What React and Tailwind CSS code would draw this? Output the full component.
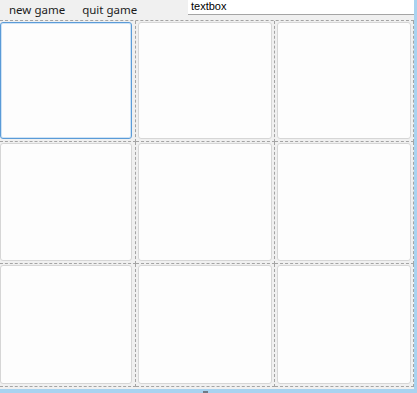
import React from 'react';

const rows = [0, 1, 2];
const cols = [0, 1, 2];

const Cell = ({ row, col }) => {
  const focused = row === 0 && col === 0;
  const widths = ['w-[136px]', 'w-[139px]', 'w-[139px]'];
  const heights = ['h-[121px]', 'h-[122px]', 'h-[123px]'];
  return (
    <div
      className={`${widths[col]} ${heights[row]} border-r border-b border-dashed border-[#a4a4a4] ${
        col === 0 ? 'pl-0 pr-[3px]' : 'px-[2px]'
      } py-[1px] pb-[2px] flex`}
    >
      <button
        className={`flex-1 rounded-[3px] bg-[#fdfdfd] border ${
          focused ? 'border-[#5a9bd8] shadow-[inset_0_0_0_1px_#cfe3f5]' : 'border-[#d6d6d6]'
        }`}
      />
    </div>
  );
};

const App = () => {
  return (
    <div className="w-[417px] h-[393px] bg-[#f0f0f0] flex flex-col overflow-hidden font-['Noto_Sans',sans-serif]">
      <div className="flex flex-1">
        <div className="w-[414px] flex flex-col">
          {/* menu + textbox */}
          <div className="h-[20px] flex items-start">
            <div className="flex items-center h-[19px] text-[11.5px] text-[#1b1b1b]">
              <span className="ml-[9px]">new game</span>
              <span className="ml-[17px]">quit game</span>
            </div>
            <div className="ml-auto w-[226px] h-[15px] bg-white border-b border-[#a5a5a5] pl-[3px] text-[11px] leading-[12px] text-black font-['Liberation_Sans',sans-serif]">
              textbox
            </div>
          </div>
          {/* board */}
          <div className="border-t border-dashed border-[#a4a4a4] flex flex-col">
            {rows.map((r) => (
              <div key={r} className="flex">
                {cols.map((c) => (
                  <Cell key={c} row={r} col={c} />
                ))}
              </div>
            ))}
          </div>
        </div>
        <div className="w-[3px] bg-[#a9d3f0]" />
      </div>
      <div className="h-[4px] bg-[#a9d3f0] relative">
        <div className="absolute left-[203px] top-[2px] w-[5px] h-[2px] bg-[#6f7a86]" />
      </div>
    </div>
  );
};

export default App;
